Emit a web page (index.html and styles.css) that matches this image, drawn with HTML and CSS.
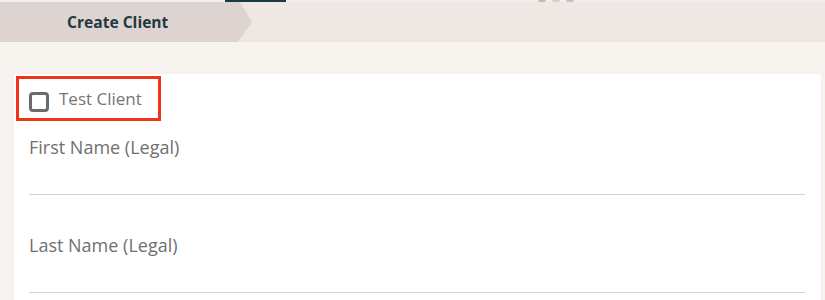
FILE: index.html
```html
<!DOCTYPE html>
<html lang="en">
<head>
<meta charset="UTF-8">
<meta name="viewport" content="width=device-width, initial-scale=1.0">
<title>Create Client</title>
<link rel="stylesheet" href="styles.css">
</head>
<body>

  <div class="top-strip">
    <span class="tab-mark"></span>
    <span class="logo-bits">
      <i class="bit tan"></i>
      <i class="bit pink"></i>
      <i class="bit grey"></i>
    </span>
  </div>

  <div class="breadcrumb">
    <div class="crumb">Create Client</div>
  </div>

  <div class="page">
    <form class="card">
      <label class="test-client">
        <span class="check"></span>
        <span class="check-text">Test Client</span>
      </label>

      <div class="field">
        <label class="field-label">First Name (Legal)</label>
        <input type="text" class="field-input">
      </div>

      <div class="field">
        <label class="field-label">Last Name (Legal)</label>
        <input type="text" class="field-input">
      </div>
    </form>
  </div>

</body>
</html>
```

FILE: styles.css
```css
body {
  margin: 0;
  background-color: #f7f3ef;
  font-family: "Open Sans", "Liberation Sans", sans-serif;
  overflow: hidden;
}

/* header remains, cut off at the top */
.top-strip {
  height: 2px;
  display: flex;
  background-color: #f3eeeb;
}
.tab-mark {
  width: 61px;
  margin-left: 225px;
  background-color: #1d3a40;
}
.logo-bits {
  display: flex;
  gap: 6px;
  margin-left: 252px;
}
.bit {
  width: 8px;
  height: 2px;
  border-radius: 0 0 3px 3px;
}
.bit.tan { background-color: #cbbd9c; }
.bit.pink { background-color: #e6c9c3; }
.bit.grey { background-color: #c8c2bd; }

.breadcrumb {
  height: 40px;
  background-color: #efe7e4;
}
.crumb {
  width: 185px;
  height: 40px;
  padding-left: 67px;
  background-color: #ddd3d0;
  clip-path: polygon(0 0, 240px 0, 252px 20px, 238px 40px, 0 40px);
  color: #1f3a3d;
  font-size: 15.6px;
  font-weight: 700;
  line-height: 40px;
}

.page {
  padding: 32px 4px 0 14px;
}
.card {
  background-color: #fff;
  padding: 2px 16px 10px 2px;
  box-shadow: 0 0 3px rgba(0, 0, 0, 0.03);
}

.test-client {
  display: flex;
  align-items: center;
  width: 129px;
  height: 39px;
  padding-left: 10px;
  border: 3px solid #ec3619;
  cursor: pointer;
}
.check {
  width: 14px;
  height: 14px;
  margin-top: 6px;
  border: 3px solid #6b6b6b;
  border-radius: 4px;
}
.check-text {
  margin-left: 10px;
  color: #767676;
  font-size: 17px;
}

.field {
  margin-left: 13px;
  padding-top: 14px;
}
.field + .field {
  padding-top: 38px;
}
.field-label {
  display: block;
  color: #707070;
  font-size: 18px;
  line-height: 24px;
}
.field-input {
  display: block;
  width: 100%;
  height: 36px;
  box-sizing: border-box;
  border: none;
  border-bottom: 1px solid #d3d3d3;
  background: transparent;
  outline: none;
}
```
